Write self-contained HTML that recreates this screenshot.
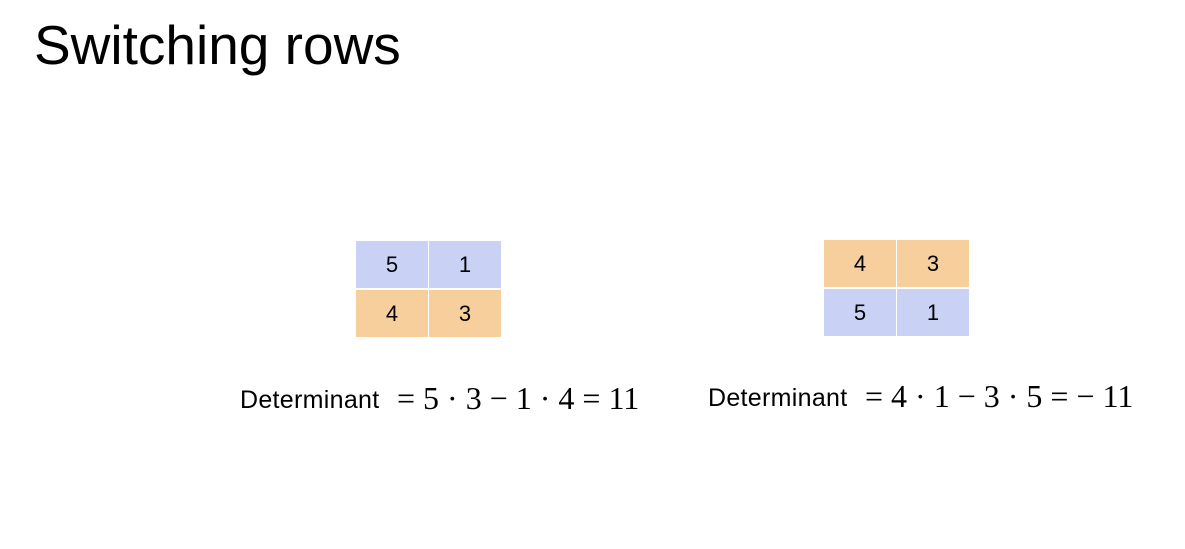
<!DOCTYPE html>
<html><head><meta charset="utf-8"><style>
body{margin:0;width:1185px;height:549px;background:#fff;position:relative;overflow:hidden;font-family:"Liberation Sans",Arial,sans-serif;color:#000}
.t{position:absolute;left:34px;top:12px;font-size:55px;line-height:66px;white-space:nowrap}
.c{position:absolute;width:72px;height:47px;display:flex;align-items:center;justify-content:center;font-size:22px}
.b{background:#c9d1f5}.o{background:#f6cf9d}
.d{position:absolute;font-size:25px;letter-spacing:0.3px;white-space:nowrap;line-height:30px}
.m{position:absolute;font-family:"Liberation Serif",serif;font-size:32px;white-space:nowrap;line-height:30px}
</style></head><body>
<div class="t">Switching rows</div>
<div class="c b" style="left:356px;top:241px">5</div>
<div class="c b" style="left:429px;top:241px">1</div>
<div class="c o" style="left:356px;top:290px">4</div>
<div class="c o" style="left:429px;top:290px">3</div>
<div class="c o" style="left:824px;top:240px">4</div>
<div class="c o" style="left:897px;top:240px">3</div>
<div class="c b" style="left:824px;top:289px">5</div>
<div class="c b" style="left:897px;top:289px">1</div>
<div class="d" style="left:240px;top:385px">Determinant</div>
<div class="m" style="left:397px;top:383px">= 5 · 3 − 1 · 4 = 11</div>
<div class="d" style="left:708px;top:383px">Determinant</div>
<div class="m" style="left:865px;top:381px">= 4 · 1 − 3 · 5 = − 11</div>
</body></html>
